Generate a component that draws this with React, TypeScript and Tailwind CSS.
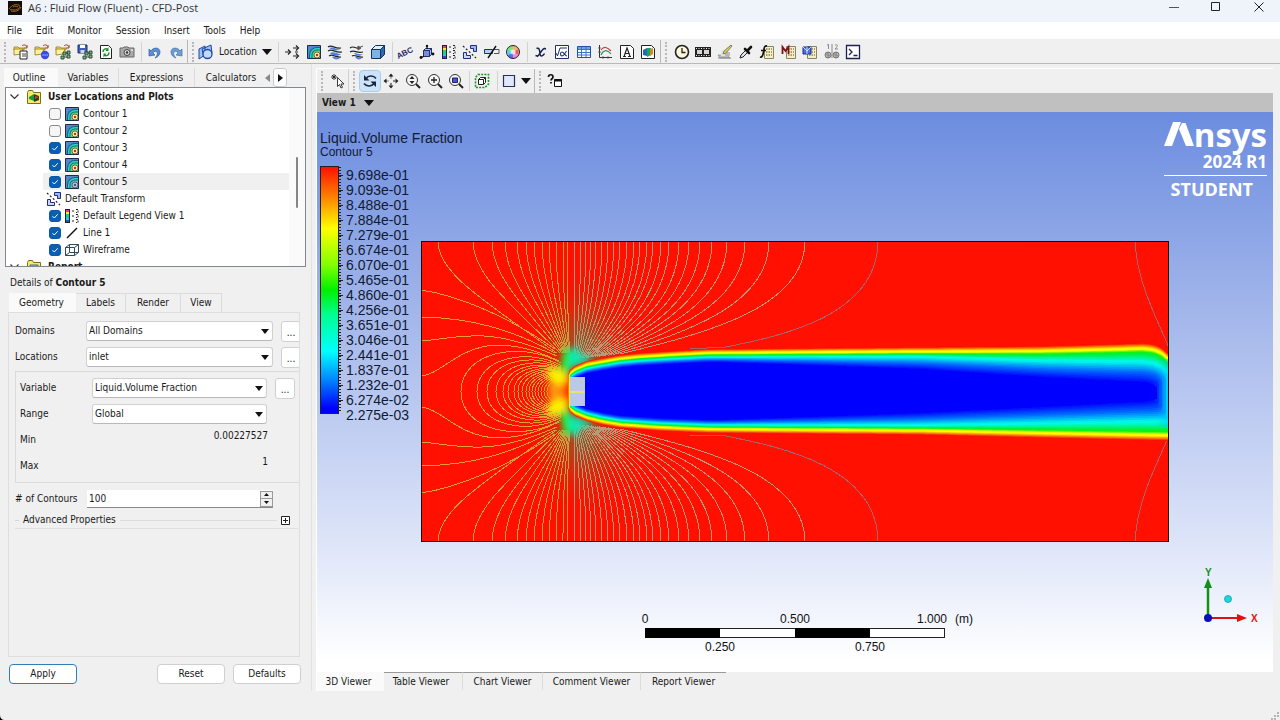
import React from "react";

/* ---------- icon helpers ---------- */

type Kids = { children?: React.ReactNode };

const Ico = ({ children }: Kids) => (
  <svg width="16" height="16" viewBox="0 0 16 16" fill="none" aria-hidden="true" className="shrink-0">
    {children}
  </svg>
);

const Folder = () => (
  <>
    <path d="M1 3h4l1 1h5v2H1z" fill="#f6df5a" stroke="#8c7a1c" strokeWidth="0.8" />
    <path d="M1 11V5h9l-2 5z" fill="#fdf19a" stroke="#8c7a1c" strokeWidth="0.8" />
    <path d="M9 2c2-2 4-1 5 1M14 1v3h-3" stroke="#a33a1c" strokeWidth="1" />
  </>
);

const MiniTree = () => (
  <path d="M8 8h3v3H8zM12 11h3v3h-3zM12 7h3v3h-3zM6 12h3v3H6zM11 9h2M9 13h3" stroke="#24412e" fill="#7fb08a" strokeWidth="0.9" />
);

const OpenFile = () => (
  <Ico><Folder /><path d="M7 7h7v8H7z" fill="#fff" stroke="#222" /><path d="M9 10h4M9 12h4" stroke="#444" /></Ico>
);
const OpenState = () => (
  <Ico><Folder /><circle cx="11" cy="11" r="4.2" fill="#3b4be0" /><path d="M8.6 11h1M10.6 11h1M12.6 11h1" stroke="#fff" /></Ico>
);
const OpenTree = () => <Ico><Folder /><MiniTree /></Ico>;
const SaveTree = () => (
  <Ico>
    <path d="M1 1h9v8H1z" fill="#3f62b8" stroke="#1f2f66" />
    <path d="M3 1h5v3H3z" fill="#fff" /><path d="M3.5 6h4v3h-4z" fill="#c9d4f0" /><MiniTree />
  </Ico>
);
const Reload = () => (
  <Ico>
    <path d="M2.5 1.5h8l3 3v10h-11z" fill="#fff" stroke="#222" />
    <path d="M5 8c0-3 3-4 5-2.300M11 8.500c0 3-3 4-5 2.500" stroke="#15932c" strokeWidth="1.500" />
    <path d="M10.500 3v4h-3zM5.500 13.500v-4h3z" fill="#15932c" />
  </Ico>
);
const Camera = () => (
  <Ico>
    <path d="M5 3h4l1 1h5v9H1V4h3z" fill="#aaa" stroke="#666" />
    <circle cx="8" cy="8.500" r="3" fill="#ddd" stroke="#444" /><circle cx="8" cy="8.500" r="1.200" fill="#333" />
    <path d="M12 6h2" stroke="#fff" />
  </Ico>
);
const Undo = () => (
  <Ico><path d="M4 7c2-4 9-4 9 1 0 3-2 5-5 6 2-2 3-4 2-6-1-1.500-3-1-4 1l2 2-6 1 0-7z" fill="#5b8fd4" stroke="#2c5b9f" strokeWidth="0.700" /></Ico>
);
const Redo = () => (
  <Ico><path d="M12 7C10 3 3 3 3 8c0 3 2 5 5 6-2-2-3-4-2-6 1-1.500 3-1 4 1l-2 2 6 1 0-7z" fill="#6d9fd6" stroke="#3d6ea8" strokeWidth="0.700" /></Ico>
);
const LocationIcon = () => (
  <Ico>
    <path d="M1 5l6-3 0 9-6 4zM4 5l9-4 1 8-8 4z" fill="#9fc0f2" stroke="#1c47a4" />
    <circle cx="9.500" cy="10" r="4.500" fill="#c5dafa" stroke="#1c47a4" strokeWidth="1.300" />
  </Ico>
);
const Vectors = () => (
  <Ico>
    <path d="M0 8h5M8 4h5M10 8h3M8 12h5" stroke="#222" strokeWidth="1" />
    <path d="M3 5.500L5.500 8 3 10.500M11 1.500L13.500 4 11 6.500M11 9.500l2.500 2.500L11 14.500" stroke="#222" strokeWidth="1.200" />
  </Ico>
);
const ContourIcon = ({ muted = false }: { muted?: boolean }) => (
  <Ico>
    <path d="M1.500 1.500h13v13h-13z" fill="#5587c8" stroke="#1d2b4a" />
    <path d="M3 14v-3a8 8 0 0 1 8-8h3v11z" fill="#1d5f86" />
    <path d="M4 14v-3a7 7 0 0 1 7-7h3v10z" fill="#22d6cc" />
    <path d="M5.500 14v-3a5.500 5.500 0 0 1 5.500-5.500h3V14z" fill="#176a5c" />
    <path d="M6.500 14v-3a4.500 4.500 0 0 1 4.500-4.500h3V14z" fill={muted ? "#6fb4c8" : "#58d890"} />
    <circle cx="11" cy="11" r="3" fill={muted ? "#b8c8d8" : "#fbf3a8"} stroke={muted ? "#3d4a66" : "#6b4a20"} strokeWidth="0.800" />
    <circle cx="11" cy="11" r="1.200" fill={muted ? "#4a5570" : "#c8281c"} />
  </Ico>
);
const Streamlines = () => (
  <Ico>
    <path d="M1 3c4-3 6 2 13 1M1 7c5-3 6 2 14 1M2 12c4-3 6 2 12 1" stroke="#222" strokeWidth="1.200" />
    <path d="M2 4c4-2 7 2 11 1-4 3-8 0-11-1zM3 9c4-2 6 1 11 1-3 3-8 2-11-1zM5 13c3-1 4 1 8 1-2 2-6 2-8-1z" fill="#4f7fd8" />
  </Ico>
);
const Particles = () => (
  <Ico>
    <path d="M1 4c4-3 5 1 9 0M1 8c5-3 6 2 13 0M3 12c3-2 6 2 11 1" stroke="#222" strokeWidth="1.200" />
    <path d="M5 9c3 0 5 2 9 1-3 3-7 2-9-1zM6 13c3-1 4 1 7 1-2 2-5 2-7-1z" fill="#4f7fd8" />
    <path d="M9 4l5-2M9 2l3 2-3 2z" fill="#555" stroke="#555" />
  </Ico>
);
const Volume = () => (
  <Ico>
    <path d="M1.500 5.500h9v9h-9z" fill="#7db4e4" stroke="#14335c" />
    <path d="M1.500 5.500l4-4h9l-4 4z" fill="#dcf0fc" stroke="#14335c" />
    <path d="M10.500 14.500v-9l4-4v9z" fill="#2a6cb4" stroke="#14335c" />
  </Ico>
);
const AbcIcon = () => (
  <svg width="18" height="16" viewBox="0 0 18 16" className="shrink-0" aria-hidden="true">
    <text x="0" y="14" fontSize="8" fontWeight="700" fontFamily="Liberation Sans" fill="#2b2a6d" transform="rotate(-26 3 12)">ABC</text>
  </svg>
);
const CoordIcon = () => (
  <Ico>
    <path d="M4.500 6.500h6v6h-6z" fill="#7b90d4" stroke="#20306b" /><path d="M4.500 6.500l2-2h6l-2 2zM10.500 12.500l2-2v-6l-2 2z" fill="#a9b9ec" stroke="#20306b" />
    <path d="M8 5V1M12 10h3M5 12l-3 2" stroke="#111" strokeWidth="1.200" /><circle cx="14" cy="10" r="1.400" fill="#111" /><circle cx="2" cy="13.500" r="1.400" fill="#111" /><circle cx="8" cy="2" r="1.200" fill="#111" />
  </Ico>
);
const LegendIcon = () => (
  <Ico>
    <rect x="1.500" y="1.500" width="4" height="13" fill="#21d07b" stroke="#222" />
    <path d="M2 2h3v2H2z" fill="#f5378a" /><path d="M2 4h3v2H2z" fill="#fbe64a" /><path d="M2 10h3v2H2z" fill="#23c9e8" /><path d="M2 12h3v2H2z" fill="#2a4fe0" />
    <path d="M8 3h2M8 8h2M8 13h2" stroke="#222" />
    <path d="M12 1.500h2v3h-2M12 6.500h2v3h-2M12 11.500h2v3h-2" stroke="#222" strokeDasharray="2 1" />
  </Ico>
);
const TransformIcon = () => (
  <Ico>
    <path d="M8.500 1.500h6v6h-3v-3h-3z" fill="#9db6ee" stroke="#1d2f7c" />
    <path d="M1.500 8.500h3v3h4v3h-7z" fill="#c9d6f6" stroke="#1d2f7c" />
    <path d="M1 2l13 12" stroke="#222" strokeDasharray="2 2" strokeWidth="1.200" />
  </Ico>
);
const ClipIcon = () => (
  <Ico>
    <path d="M0.500 5.500h8v4h-8z" fill="#b9ccf5" stroke="#1d2f7c" /><path d="M10 5.500h5v4h-5" stroke="#555" strokeWidth="1" />
    <path d="M4 14L12 2" stroke="#111" strokeWidth="1.400" />
  </Ico>
);
const ColorWheel = () => (
  <Ico>
    <path d="M8 8V1.500A6.500 6.500 0 0 1 13.600 4.700z" fill="#f3b27c" /><path d="M8 8l5.600-3.300v6.600z" fill="#f05a5a" />
    <path d="M8 8l5.600 3.300A6.500 6.500 0 0 1 8 14.500z" fill="#f08ae0" /><path d="M8 8v6.500a6.500 6.500 0 0 1-5.600-3.200z" fill="#5a6cf0" />
    <path d="M8 8l-5.600 3.300V4.700z" fill="#43d6e8" /><path d="M8 8L2.400 4.700A6.500 6.500 0 0 1 8 1.500z" fill="#7fe86a" />
    <circle cx="8" cy="8" r="6.500" stroke="#222" /><circle cx="8" cy="8" r="2.500" fill="#fff" opacity="0.700" />
  </Ico>
);
const VarIcon = () => (
  <Ico><path d="M3.500 4.500c4-2 3 6 4 7s3 0 4-2M12 4.500c-3-1-5 7-8 8" stroke="#17204f" strokeWidth="1.500" /><path d="M4.500 12l-2-.5M11.500 4.500l1.500.5" stroke="#17204f" strokeWidth="1.500" /></Ico>
);
const ExprIcon = () => (
  <Ico>
    <path d="M1.500 1.500h13v13h-13z" fill="#fff" stroke="#1d2f6c" />
    <path d="M2 9l1.500 3L6 4h7" stroke="#1d2f6c" /><path d="M12.500 7c-2 3-2.500 5-4.500 5s-2-4 0-4 3 4 5 4" stroke="#1d2f6c" strokeWidth="1.100" />
  </Ico>
);
const TableIcon = () => (
  <Ico>
    <path d="M1.500 2.500h13v11h-13z" fill="#fff" stroke="#23539c" /><path d="M2 3h12v2H2z" fill="#6fa0e8" />
    <path d="M2 5.500h12M2 8.500h12M2 11h12M5.500 3v10M10 3v10" stroke="#3a74c4" />
  </Ico>
);
const ChartIcon = () => (
  <Ico>
    <path d="M2.500 1v12.500H15" stroke="#333" /><path d="M1 4h3M1 8h3M6 12v3M11 12v3" stroke="#555" strokeWidth="0.800" />
    <path d="M4 6c3-4 6-3 10 1" stroke="#c83a3a" strokeWidth="1.200" /><path d="M4 11c2-5 6-6 10-1" stroke="#2b8f6a" strokeWidth="1.200" />
  </Ico>
);
const CommentIcon = () => (
  <Ico>
    <path d="M1.500 1.500h10l3 3v10h-13z" fill="#fff" stroke="#222" />
    <path d="M4 12.500h3M9 12.500h3M5.200 12L8 4l3 8M6.200 9.500h3.600" stroke="#222" strokeWidth="1.200" />
  </Ico>
);
const FigureIcon = () => (
  <Ico>
    <path d="M1.500 1.500h10l3 3v10h-13z" fill="#fff" stroke="#222" />
    <path d="M3 6l4-2v8l-4-1z" fill="#2563d0" /><path d="M7 4l4 0v7l-4 2z" fill="#19a84a" /><path d="M10 5l3-1v6l-3 2z" fill="#d8862f" />
  </Ico>
);
const ClockIcon = () => (
  <Ico><circle cx="8" cy="8" r="6.500" fill="#fbf7d8" stroke="#222" strokeWidth="1.600" /><path d="M8 4v4.500h3.500" stroke="#222" strokeWidth="1.300" /></Ico>
);
const FilmIcon = () => (
  <Ico>
    <path d="M0 3h16v10H0z" fill="#222" /><path d="M2 6h5v4H2zM9 6h5v4H9z" fill="#d8d6cf" />
    <path d="M1 4.500h14M1 11.500h14" stroke="#eee" strokeDasharray="1 1.500" />
  </Ico>
);
const QuickEdit = () => (
  <Ico>
    <path d="M1 11h9l3 3H3z" fill="#bbb" stroke="#888" strokeWidth="0.700" /><path d="M4 6h7v6H4z" fill="#e4e4e4" />
    <path d="M6 10l1-3 7-6 1 1-6 7z" fill="#d9d14a" stroke="#555" strokeWidth="0.700" /><path d="M9 9h4M8 11h5M1 14h13" stroke="#888" />
  </Ico>
);
const ProbeIcon = () => (
  <Ico><path d="M2 14l1-3 5-5 2 2-5 5z" fill="#dfe6f5" stroke="#222" /><path d="M7 5l4 4M10 6l3-3" stroke="#111" strokeWidth="2.600" strokeLinecap="round" /></Ico>
);
const Calc = () => (
  <>
    <path d="M5.500 2.500h9v12h-9z" fill="#f5efc8" stroke="#8a845c" />
    <path d="M7 5h6M7 8h6M7 11h6" stroke="#8a845c" strokeDasharray="1.500 1" strokeWidth="1.400" />
  </>
);
const FnCalc = () => (
  <Ico><Calc /><path d="M8 2c-3-1-3 3-3.500 6S3 14 1 13M2 6.500h5" stroke="#111" strokeWidth="1.600" /></Ico>
);
const MacroCalc = () => (
  <Ico><Calc /><path d="M1.500 10V3l3 4 3-4v7" stroke="#7d1414" strokeWidth="1.800" /></Ico>
);
const MeshCalc = () => (
  <Ico><Calc /><path d="M1 3h8v7H1z" fill="#4a6fe0" stroke="#1a2f8c" /><path d="M1 3l4 4 4-4M5 3v7" stroke="#dfe7ff" strokeWidth="0.900" /></Ico>
);
const CompareIcon = () => (
  <Ico>
    <path d="M3 1l1.500-.5V5M8 0v14M11 1.500c2-2 4 0 0 3.500h3" stroke="#888" />
    <circle cx="4" cy="11" r="3" fill="#b5b5b5" stroke="#777" /><circle cx="12" cy="11" r="3" fill="#b5b5b5" stroke="#777" />
    <path d="M2 10l4 2M10 10l4 2M4 8v6M12 8v6" stroke="#777" strokeWidth="0.700" />
  </Ico>
);
const ConsoleIcon = () => (
  <Ico><path d="M1.500 1.500h13v13h-13z" fill="#fff" stroke="#1b2450" strokeWidth="1.300" /><path d="M4 5l3 3-3 3M8.500 11.500h4" stroke="#1b2450" strokeWidth="1.300" /></Ico>
);
const PickIcon = () => (
  <Ico>
    <path d="M4 1v6M1 4h6M2 2l4 4M6 2L2 6" stroke="#222" strokeWidth="0.900" />
    <path d="M7.500 4.500v9l2-2 1.500 3.500 1.500-.7-1.500-3.300h3z" fill="#fff" stroke="#222" strokeWidth="0.900" />
  </Ico>
);
const RotateIcon = () => (
  <Ico>
    <path d="M4 5.500c2-3 7.500-3.500 10 0M12 10.500c-2 3-7.500 3.500-10 0" stroke="#1b2440" strokeWidth="1.500" />
    <path d="M2 2v5.500h5.500zM14 14V8.500H8.500z" fill="#1b2440" />
  </Ico>
);
const PanIcon = () => (
  <Ico>
    <path d="M8 2v4M8 10v4M2 8h4M10 8h4" stroke="#222" strokeWidth="1.100" strokeDasharray="2.500 1" />
    <path d="M8 0.500l2.500 3h-5zM8 15.500l2.500-3h-5zM0.500 8l3-2.500v5zM15.500 8l-3-2.500v5z" fill="#222" />
  </Ico>
);
const Lens = ({ children }: Kids) => (
  <Ico><circle cx="7" cy="7" r="5.500" fill="#f6f6f6" stroke="#333" strokeWidth="1" /><path d="M11 11l4 4" stroke="#222" strokeWidth="2" />{children}</Ico>
);
const ZoomDrag = () => <Lens><path d="M7 3l2.500 3h-5zM7 11l2.500-3h-5z" fill="#222" /></Lens>;
const ZoomBox = () => <Lens><path d="M4 7h6M7 4v6" stroke="#222" strokeWidth="1.300" /></Lens>;
const FitView = () => <Lens><path d="M4.500 5h5v4.500h-5z" fill="#4a55c8" stroke="#1a226c" /></Lens>;
const HighlightIcon = () => (
  <Ico>
    <path d="M4 1.500h10.500V11l-3.500 3.500H1.500V4.500z" stroke="#159a1f" strokeWidth="1.600" strokeDasharray="2 1.200" />
    <path d="M4.500 6.500h5v5h-5zM4.500 6.500l2-2h5v5l-2 2M9.500 6.500l2-2" fill="#fff" stroke="#222" />
  </Ico>
);
const SquareIcon = () => (
  <Ico><path d="M2.500 2.500h11v11h-11z" fill="#dfe7fb" stroke="#27305a" strokeWidth="1.200" /></Ico>
);
const HelpIcon = () => (
  <Ico>
    <path d="M1.500 4c0-3 4.500-3 4.500 0 0 1.700-2 1.800-2 3.500M4 9v1.600" stroke="#111" strokeWidth="1.700" />
    <path d="M7.500 6.500h7v7h-7z" fill="#fff" stroke="#111" strokeWidth="1" /><path d="M7 7.500h8" stroke="#111" strokeWidth="2" />
  </Ico>
);
const LineIcon = () => <Ico><path d="M3 13L13 3" stroke="#111" strokeWidth="1.500" /></Ico>;
const WireframeIcon = () => (
  <Ico><path d="M1.500 5.500h9v8h-9zM5.500 2.500h9v8h-9zM1.500 5.500l4-3M10.500 5.500l4-3M1.500 13.500l4-3M10.500 13.500l4-3" stroke="#2b4a5c" /></Ico>
);
const FolderPlots = () => (
  <Ico>
    <path d="M1.500 3.500v11h13v-11h-7l-1-2h-4z" fill="#f7ea66" stroke="#7c6e1a" />
    <path d="M3 8l5-3v7l-5-2z" fill="#1a9a3c" /><path d="M8 5l5 2v4l-5 2z" fill="#2a3d2a" /><path d="M9 7l4 1-4 2z" fill="#d83a2a" />
  </Ico>
);
const FolderReport = () => (
  <Ico><path d="M1.500 3.500v11h13v-11h-7l-1-2h-4z" fill="#f7ea66" stroke="#7c6e1a" /><path d="M4 6h8v6H4z" fill="#9ab3ea" stroke="#47609c" /></Ico>
);
const Down = () => (
  <svg width="10" height="6" viewBox="0 0 10 6" className="shrink-0" aria-hidden="true"><path d="M0 0h10L5 6z" fill="#111" /></svg>
);

/* ---------- toolbar ---------- */

const ToolBtn = ({ label, on = false, children }: { label: string; on?: boolean } & Kids) => (
  <button
    type="button"
    aria-label={label}
    className={
      on
        ? "flex h-[22px] items-center justify-center rounded-sm border border-[#a8cdea] bg-[#cce4f7]"
        : "flex h-[22px] items-center justify-center"
    }
  >
    {children}
  </button>
);
const Handle = () => (
  <span className="mx-1 h-5 w-0 shrink-0 border-l-2 border-dotted border-[#b8b8b8]" />
);
const Sep = () => <span className="h-5 w-px shrink-0 bg-[#d2d2d2]" />;

const MainToolbar = () => (
  <div className="flex h-[25px] shrink-0 items-center border-b border-[#b9b9b9] bg-[#f0f0f0] pt-px">
    <Handle />
    <div className="grid w-[128px] grid-cols-6">
      <ToolBtn label="Load results"><OpenFile /></ToolBtn>
      <ToolBtn label="Load session"><OpenState /></ToolBtn>
      <ToolBtn label="Load state"><OpenTree /></ToolBtn>
      <ToolBtn label="Save state"><SaveTree /></ToolBtn>
      <ToolBtn label="Reload"><Reload /></ToolBtn>
      <ToolBtn label="Save picture"><Camera /></ToolBtn>
    </div>
    <div className="flex w-[6px] justify-center"><Sep /></div>
    <div className="grid w-[43px] grid-cols-2">
      <ToolBtn label="Undo"><Undo /></ToolBtn>
      <ToolBtn label="Redo"><Redo /></ToolBtn>
    </div>
    <span className="h-6 w-px bg-[#b9b9b9]" />
    <Handle />
    <button type="button" className="flex w-[74px] items-center justify-between">
      <LocationIcon />Location<Down />
    </button>
    <div className="flex w-[7px] justify-end"><Sep /></div>
    <div className="ml-[3px] grid w-[107px] grid-cols-5">
      <ToolBtn label="Vector"><Vectors /></ToolBtn>
      <ToolBtn label="Contour"><ContourIcon /></ToolBtn>
      <ToolBtn label="Streamline"><Streamlines /></ToolBtn>
      <ToolBtn label="Particle track"><Particles /></ToolBtn>
      <ToolBtn label="Volume rendering"><Volume /></ToolBtn>
    </div>
    <div className="flex w-[6px] justify-center"><Sep /></div>
    <div className="grid w-[129px] grid-cols-6">
      <ToolBtn label="Text"><AbcIcon /></ToolBtn>
      <ToolBtn label="Coordinate frame"><CoordIcon /></ToolBtn>
      <ToolBtn label="Legend"><LegendIcon /></ToolBtn>
      <ToolBtn label="Instance transform"><TransformIcon /></ToolBtn>
      <ToolBtn label="Clip plane"><ClipIcon /></ToolBtn>
      <ToolBtn label="Color map"><ColorWheel /></ToolBtn>
    </div>
    <div className="flex w-[6px] justify-center"><Sep /></div>
    <div className="grid w-[129px] grid-cols-6">
      <ToolBtn label="Variable"><VarIcon /></ToolBtn>
      <ToolBtn label="Expression"><ExprIcon /></ToolBtn>
      <ToolBtn label="Table"><TableIcon /></ToolBtn>
      <ToolBtn label="Chart"><ChartIcon /></ToolBtn>
      <ToolBtn label="Comment"><CommentIcon /></ToolBtn>
      <ToolBtn label="Figure"><FigureIcon /></ToolBtn>
    </div>
    <span className="ml-px h-6 w-px bg-[#b9b9b9]" />
    <Handle />
    <div className="grid w-[193px] grid-cols-9">
      <ToolBtn label="Timestep selector"><ClockIcon /></ToolBtn>
      <ToolBtn label="Animation"><FilmIcon /></ToolBtn>
      <ToolBtn label="Quick editor"><QuickEdit /></ToolBtn>
      <ToolBtn label="Probe"><ProbeIcon /></ToolBtn>
      <ToolBtn label="Function calculator"><FnCalc /></ToolBtn>
      <ToolBtn label="Macro calculator"><MacroCalc /></ToolBtn>
      <ToolBtn label="Mesh calculator"><MeshCalc /></ToolBtn>
      <ToolBtn label="Case comparison"><CompareIcon /></ToolBtn>
      <ToolBtn label="Command editor"><ConsoleIcon /></ToolBtn>
    </div>
  </div>
);

/* ---------- left column ---------- */

const Check = ({ label, on }: { label: string; on: boolean }) => (
  <span className="relative flex size-3 shrink-0">
    <input
      type="checkbox"
      aria-label={label}
      defaultChecked={on}
      className="size-3 appearance-none rounded-[3px] border border-[#8a8a8a] bg-[#f6f6f6] checked:border-[#0a5aa8] checked:bg-[#0a5fb4]"
    />
    {on && (
      <svg viewBox="0 0 12 12" className="pointer-events-none absolute inset-0" aria-hidden="true">
        <path d="M3.500 6.200l1.800 1.800 3.400-3.700" stroke="#fff" fill="none" />
      </svg>
    )}
  </span>
);

const items = [
  { name: "Contour 1", on: false, icon: <ContourIcon /> },
  { name: "Contour 2", on: false, icon: <ContourIcon /> },
  { name: "Contour 3", on: true, icon: <ContourIcon /> },
  { name: "Contour 4", on: true, icon: <ContourIcon /> },
  { name: "Contour 5", on: true, icon: <ContourIcon muted />, selected: true },
  { name: "Default Transform", on: null, icon: <TransformIcon /> },
  { name: "Default Legend View 1", on: true, icon: <LegendIcon /> },
  { name: "Line 1", on: true, icon: <LineIcon /> },
  { name: "Wireframe", on: true, icon: <WireframeIcon /> },
];

const Chevron = () => (
  <svg width="9" height="6" viewBox="0 0 9 6" className="shrink-0" aria-hidden="true">
    <path d="M0.500 0.500l4 4 4-4" stroke="#333" strokeWidth="1.200" fill="none" />
  </svg>
);

const TreeFolder = ({ name, icon }: { name: string; icon: React.ReactNode }) => (
  <div className="flex h-[17px] shrink-0 items-center gap-[6px] pl-1 font-bold">
    <Chevron />
    <span className="ml-px flex">{icon}</span>
    {name}
  </div>
);

const Tree = () => (
  <div className="mx-[5px] flex h-[180px] shrink-0 justify-between overflow-hidden border border-[#828790] bg-white">
    <div className="flex flex-1 flex-col">
      <TreeFolder name="User Locations and Plots" icon={<FolderPlots />} />
      {items.map((it) => (
        <div
          key={it.name}
          className={
            it.selected
              ? "ml-[37px] flex h-[17px] shrink-0 items-center gap-[3px] bg-[#f0f0f0] pl-[6px]"
              : it.on === null
                ? "ml-[37px] flex h-[17px] shrink-0 items-center gap-[3px] pl-[3px]"
                : "ml-[37px] flex h-[17px] shrink-0 items-center gap-[3px] pl-[6px]"
          }
        >
          {it.on !== null && <Check label={it.name} on={it.on} />}
          {it.icon}
          {it.name}
        </div>
      ))}
      <TreeFolder name="Report" icon={<FolderReport />} />
    </div>
    <div className="flex w-4 justify-center bg-[#fafafa] pt-[69px]">
      <span className="h-[51px] w-[2px] rounded bg-[#858585]" />
    </div>
  </div>
);

const Field = ({ id, value, width }: { id: string; value: string; width: string }) => (
  <span className={"relative flex h-5 items-center " + width}>
    <select
      id={id}
      defaultValue={value}
      className="h-5 w-full appearance-none rounded-[3px] border border-[#d0d0d0] border-b-[#b8b8b8] bg-white pl-[2px]"
    >
      <option>{value}</option>
    </select>
    <svg viewBox="0 0 8 5" className="pointer-events-none absolute right-1 h-[5px] w-2" aria-hidden="true">
      <path d="M0 0h8L4 5z" fill="#111" />
    </svg>
  </span>
);

const More = ({ label }: { label: string }) => (
  <button type="button" aria-label={label} className="flex h-[21px] w-5 shrink-0 items-center justify-center rounded-[3px] border border-[#d0d0d0] bg-white pt-1">
    ...
  </button>
);

const Push = ({ text, primary = false }: { text: string; primary?: boolean }) => (
  <button
    type="button"
    className={
      primary
        ? "h-5 w-[68px] rounded-[4px] border border-[#2f7fb5] bg-white"
        : "h-5 w-[68px] rounded-[4px] border border-[#cfcfcf] bg-white"
    }
  >
    {text}
  </button>
);

const LeftPanel = () => (
  <div className="flex w-[312px] shrink-0 flex-col border-r border-[#e2e2e2] pt-1">
    <div className="flex h-[19px] shrink-0 items-stretch pl-1" role="tablist">
      <button type="button" role="tab" aria-selected="true" className="w-[54px] bg-[#fafafa] pr-1">Outline</button>
      <button type="button" role="tab" className="w-[61px] border-r border-[#dcdcdc]">Variables</button>
      <button type="button" role="tab" className="w-[76px] border-r border-[#dcdcdc]">Expressions</button>
      <button type="button" role="tab" className="w-[66px] pl-[6px] whitespace-nowrap">Calculators</button>
      <button type="button" aria-label="Scroll tabs left" className="flex w-3 items-center justify-center">
        <svg width="5" height="8" viewBox="0 0 5 8" aria-hidden="true"><path d="M5 0v8L0 4z" fill="#888" /></svg>
      </button>
      <button type="button" aria-label="Scroll tabs right" className="flex w-[14px] items-center justify-center rounded-[3px] border border-[#ccc] bg-white">
        <svg width="5" height="8" viewBox="0 0 5 8" aria-hidden="true"><path d="M0 0v8l5-4z" fill="#111" /></svg>
      </button>
    </div>
    <Tree />
    <div className="flex h-[26px] shrink-0 items-center pt-[5px] pl-[10px]">
      <span>Details of <b>Contour 5</b></span>
    </div>
    <div className="flex h-[19px] shrink-0 pl-[9px]" role="tablist">
      <button type="button" role="tab" aria-selected="true" className="w-[67px] bg-[#fafafa] pr-[2px]">Geometry</button>
      <button type="button" role="tab" className="w-[50px] border-t border-r border-[#dcdcdc]">Labels</button>
      <button type="button" role="tab" className="w-[55px] border-t border-r border-[#dcdcdc]">Render</button>
      <button type="button" role="tab" className="w-[41px] border-t border-r border-[#dcdcdc]">View</button>
    </div>
    <div className="mr-[11px] ml-2 flex flex-1 flex-col overflow-hidden border border-[#dedede] pt-[5px] pl-[6px]">
      <div className="flex h-[26px] items-center">
        <label htmlFor="domains" className="w-[71px] shrink-0">Domains</label>
        <Field id="domains" value="All Domains" width="w-[187px] shrink-0" />
        <span className="ml-2 flex"><More label="Choose domains" /></span>
      </div>
      <div className="flex h-[26px] items-center">
        <label htmlFor="locations" className="w-[71px] shrink-0">Locations</label>
        <Field id="locations" value="inlet" width="w-[187px] shrink-0" />
        <span className="ml-2 flex"><More label="Choose locations" /></span>
      </div>
      <div className="mt-px flex h-[112px] flex-col border-y border-l border-[#dadada] pt-[3px] pl-1">
        <div className="flex h-[26px] items-center">
          <label htmlFor="variable" className="w-[72px] shrink-0">Variable</label>
          <Field id="variable" value="Liquid.Volume Fraction" width="w-[175px] shrink-0" />
          <span className="ml-2 flex"><More label="Choose variable" /></span>
        </div>
        <div className="flex h-[26px] items-center">
          <label htmlFor="range" className="w-[72px] shrink-0">Range</label>
          <Field id="range" value="Global" width="w-[175px] shrink-0" />
        </div>
        <div className="flex h-[26px] w-[248px] items-center justify-between">
          <span>Min</span><span className="pb-2">0.00227527</span>
        </div>
        <div className="flex h-[26px] w-[248px] items-center justify-between">
          <span>Max</span><span className="pb-2">1</span>
        </div>
      </div>
      <div className="mt-[7px] flex h-[18px] items-center">
        <label htmlFor="contours" className="w-[72px] shrink-0 whitespace-nowrap"># of Contours</label>
        <div className="flex h-[18px] w-[186px] shrink-0 items-center border-b border-[#888] bg-white">
          <input id="contours" type="text" defaultValue="100" className="w-full min-w-0 flex-1 bg-transparent pl-[2px] outline-none" />
          <span className="flex w-[13px] flex-col">
            <button type="button" aria-label="Increase" className="flex h-2 items-center justify-center border border-[#999] bg-[#f0f0f0]">
              <svg width="5" height="3" viewBox="0 0 5 3" aria-hidden="true"><path d="M0 3h5L2.500 0z" fill="#111" /></svg>
            </button>
            <button type="button" aria-label="Decrease" className="flex h-2 items-center justify-center border border-t-0 border-[#999] bg-[#f0f0f0]">
              <svg width="5" height="3" viewBox="0 0 5 3" aria-hidden="true"><path d="M0 0h5L2.500 3z" fill="#111" /></svg>
            </button>
          </span>
        </div>
      </div>
      <div className="mt-1 flex h-4 items-center gap-1">
        <span className="h-px w-1 bg-[#d4d4d4]" />
        <span>Advanced Properties</span>
        <span className="h-px flex-1 bg-[#dcdcdc]" />
        <button type="button" aria-label="Expand advanced properties" className="mr-[9px] size-[9px]">
          <svg viewBox="0 0 9 9" className="size-[9px]" aria-hidden="true"><path d="M0.500 0.500h8v8h-8zM2 4.500h5M4.500 2v5" stroke="#222" fill="#fff" /></svg>
        </button>
      </div>
      <div className="mr-[1px] border-x border-b border-[#e0e0e0]" />
    </div>
    <div className="flex h-[34px] shrink-0 items-center gap-2 pr-[10px] pl-[9px]">
      <Push text="Apply" primary />
      <span className="flex-1" />
      <Push text="Reset" />
      <Push text="Defaults" />
    </div>
  </div>
);

/* ---------- contour plot ---------- */

const W = 748;
const H = 301;

type Pt = [number, number];

const lerp = (pts: Pt[], x: number) => {
  if (x <= pts[0][0]) return pts[0][1];
  for (let i = 1; i < pts.length; i++) {
    if (x <= pts[i][0]) {
      const [x0, y0] = pts[i - 1];
      const [x1, y1] = pts[i];
      return y0 + ((y1 - y0) * (x - x0)) / (x1 - x0);
    }
  }
  return pts[pts.length - 1][1];
};

const upper: Pt[] = [[147, 134], [149, 129], [154, 125], [166, 120], [182, 117], [199, 114], [219, 112], [250, 110], [286, 108], [386, 107], [499, 106], [619, 105], [690, 103], [722, 102], [732, 103], [740, 106], [748, 113]];
const lower: Pt[] = [[147, 166], [149, 171], [154, 175], [166, 180], [182, 184], [199, 187], [239, 190], [286, 192], [386, 193], [499, 194], [619, 197], [748, 200]];

/* red, green and blue channels of the rainbow from plume edge to core */
const channels: Pt[][] = [
  [[0, 240], [0.12, 255], [0.24, 255], [0.34, 240], [0.44, 0], [0.6, 0], [1, 0]],
  [[0, 20], [0.12, 130], [0.24, 250], [0.34, 255], [0.44, 240], [0.62, 250], [0.8, 110], [1, 0]],
  [[0, 0], [0.34, 0], [0.44, 30], [0.6, 230], [0.8, 255], [1, 255]],
];
const ramp = (t: number) => `rgb(${channels.map((s) => Math.round(lerp(s, t))).join(",")})`;

/* distance of a band from the plume edge, growing downstream */
const inset = (t: number, x: number) => {
  const near = 12 * t;
  const mid = t < 0.6 ? 15 * t : 9 + (t - 0.6) * 32;
  const far = t < 0.42 ? 19 * t : 8 + (t - 0.42) * 56;
  return lerp([[147, near], [300, near * 1.100], [499, mid], [748, far]], x);
};

const band = (t: number) => {
  const end = t < 0.7 ? W : W - (t - 0.7) * 40;
  const top: string[] = [];
  const bottom: string[] = [];
  for (let x = 147 + 5 * t; x <= end; x += x < 200 ? 2 : 4) {
    const over = Math.max(0, (x - (end - 14)) / 14);
    const d = inset(t, x) + (t < 0.7 ? 0 : over * over * 8 * (t - 0.7));
    top.push(`${x.toFixed(1)},${(lerp(upper, x) + d).toFixed(1)}`);
    bottom.unshift(`${x.toFixed(1)},${(lerp(lower, x) - d).toFixed(1)}`);
  }
  if (t < 0.7) {
    top.push(`${W},${(lerp(upper, W) + inset(t, W)).toFixed(1)}`);
    bottom.unshift(`${W},${(lerp(lower, W) - inset(t, W)).toFixed(1)}`);
  }
  return top.concat(bottom).join(" ");
};

const bands = Array.from({ length: 31 }, (_, i) => i / 30);

const leftTops = [17, 52, 71, 84, 96, 105, 113, 121, 128, 135, 142, 147];
const rightTops = [154, 160, 165, 170, 175, 181, 187, 193, 199, 206, 213, 219, 226, 232, 240, 248, 258, 268, 279, 291, 306, 324, 348, 384];
const ovals = [40, 56, 66, 75, 82, 87, 93, 97, 101, 105, 108, 111, 114, 117, 120, 123, 126];

const leftLine = (x: number) => `M${x} 0C${x} 32 ${x + (142 - x) * 0.35} 58 ${134 + x * 0.1} 112`;
const rightLine = (x: number) => {
  const k = (x - 154) / 230;
  return `M${x} 0C${x} ${50 + 15 * k} ${x - (x - 152) * 0.4} ${86 + 5 * k} ${153 + 46 * k} ${118 - 5 * k}`;
};
const ovalLine = (x: number) => {
  const k = (x - 40) / 86;
  const top = 99 + 38 * k;
  return `M140 ${122 + 14 * k}C${x + (140 - x) * 0.6} ${top} ${x} ${top + 12 - 5 * k} ${x} 150.5`;
};

const HalfLines = () => (
  <>
    <g stroke="#dca030">
      <path d="M0 49C35 54 85 74 134 108" />
      <path d="M0 76C50 77 90 88 134 112" />
      <path d="M0 100C40 97 65 84 136 115" />
      <path d="M0 135C30 132 50 78 138 120" />
      {ovals.map((x) => <path key={x} d={ovalLine(x)} />)}
    </g>
    <g stroke="#c8a040">{leftTops.map((x) => <path key={x} d={leftLine(x)} />)}</g>
    <g stroke="#b89a78">
      {rightTops.map((x) => <path key={x} d={rightLine(x)} />)}
    </g>
    <g stroke="#a5656e">
      <path d="M457 0C457 75 360 95 305 106L286 107H269" />
      <path d="M714 0C716 45 740 85 748 107" />
    </g>
  </>
);

const Plot = () => (
  <svg width={W} height={H} viewBox={`0 0 ${W} ${H}`} role="img" aria-label="Liquid volume fraction contours">
    <defs>
      <filter id="soft" x="-30%" y="-30%" width="160%" height="160%"><feGaussianBlur stdDeviation="3" /></filter>
      <filter id="edge"><feGaussianBlur stdDeviation="0.6" /></filter>
      <radialGradient id="shade"><stop offset="0" stopColor="#5f7a40" stopOpacity="0.800" /><stop offset="0.500" stopColor="#a05020" stopOpacity="0.400" /><stop offset="1" stopColor="#c03010" stopOpacity="0" /></radialGradient>
      <linearGradient id="outlet"><stop offset="0" stopColor="#00b8ff" stopOpacity="0" /><stop offset="1" stopColor="#00c8ff" stopOpacity="0.500" /></linearGradient>
      <clipPath id="frame"><rect width={W} height={H} /></clipPath>
    </defs>
    <rect width={W} height={H} fill="#ff1000" />
    <g clipPath="url(#frame)">
      <ellipse cx="162" cy="102" rx="50" ry="70" fill="url(#shade)" />
      <ellipse cx="162" cy="199" rx="50" ry="70" fill="url(#shade)" />
      <g fill="none" strokeWidth="1" shapeRendering="crispEdges">
        <HalfLines />
        <g transform="matrix(1 0 0 -1 0 301)"><HalfLines /></g>
      </g>
      <g filter="url(#soft)">
        <ellipse cx="137" cy="150" rx="10" ry="16" fill="#ff9410" />
        <path d="M127 127l16 3 5 10-10 4-10-6zM127 174l16-3 5-10-10-4-10 6z" fill="#fff000" />
        <path d="M139 128l4-20 9 2-4 26zM139 173l4 20 9-2-4-26z" fill="#20f030" />
        <path d="M147 128l2-18 5-6 6 10 14 4-22 8zM147 173l2 18 5 6 6-10 14-4-22-8z" fill="#10e8b0" />
        <ellipse cx="148" cy="150" rx="6" ry="12" fill="#ff2800" />
      </g>
      <g filter="url(#edge)">
        {bands.map((t) => <polygon key={t} points={band(t)} fill={ramp(t)} />)}
      </g>
      <rect x="736" y="118" width="12" height="68" fill="url(#outlet)" />
    </g>
    <rect x="149" y="136" width="15" height="29" fill="#bcc8ea" />
    <rect x="149" y="150" width="15" height="2" fill="#e8e070" />
    <rect x="0.500" y="0.500" width={W - 1} height={H - 1} fill="none" stroke="#1a0a0a" />
  </svg>
);

const labels = ["9.698e-01", "9.093e-01", "8.488e-01", "7.884e-01", "7.279e-01", "6.674e-01", "6.070e-01", "5.465e-01", "4.860e-01", "4.256e-01", "3.651e-01", "3.046e-01", "2.441e-01", "1.837e-01", "1.232e-01", "6.274e-02", "2.275e-03"];

const Legend = () => (
  <div className="absolute top-[18px] left-[3px] text-[#111a33]">
    <div className="text-[14px] leading-4">Liquid.Volume Fraction</div>
    <div className="text-[12px] leading-[12px]">Contour 5</div>
    <div className="mt-2 flex">
      <div className="h-[248px] w-[19px] border border-[#222] bg-[linear-gradient(to_bottom,#ff1000_0%,#ff8000_12%,#ffff00_25%,#80ff00_40%,#00f000_50%,#00ff90_60%,#00ffff_75%,#0080ff_87%,#0000ff_98%)]" />
      <svg width="5" height="248" viewBox="0 0 5 248" aria-hidden="true">
        <path d="M1 1v246" stroke="#222" strokeWidth="2" strokeDasharray="1 2" />
        <path d="M2 9v236" stroke="#222" strokeWidth="4" strokeDasharray="1 14" />
      </svg>
      <div className="ml-[2px] pt-[2px] text-[14px] leading-[15px]">
        {labels.map((l) => <div key={l}>{l}</div>)}
      </div>
    </div>
  </div>
);

const Logo = () => (
  <div className="absolute top-1 right-[6px] flex flex-col items-end font-['Open_Sans',sans-serif] font-bold text-white">
    <div className="flex h-9 items-center">
      <svg width="30" height="26" viewBox="0 0 30 26" aria-hidden="true">
        <path d="M9 1h8L8 25H0z" fill="#fff" /><path d="M18 2l3.500 0L30 25h-8L15 8z" fill="#fff" />
      </svg>
      <span className="text-[33px] leading-[33px]">nsys</span>
    </div>
    <div className="text-[17px] leading-[20px]">2024 R1</div>
    <div className="mt-[3px] h-px w-[103px] bg-white" />
    <div className="mt-[3px] mr-[14px] text-[18px] leading-[20px]">STUDENT</div>
  </div>
);

const ScaleBar = () => (
  <svg width="380" height="42" viewBox="0 0 380 42" role="img" aria-label="Scale in metres" className="font-['Liberation_Sans',Arial,sans-serif] text-[12px]">
    <rect x="40.500" y="16.500" width="299" height="9" fill="#fff" stroke="#222" />
    <path d="M40 16h75v10H40zM190 16h75v10h-75z" fill="#000" />
    <g textAnchor="middle" fill="#111">
      <text x="40" y="11">0</text><text x="190" y="11">0.500</text><text x="327" y="11">1.000</text><text x="359" y="11">(m)</text>
      <text x="115" y="39">0.250</text><text x="265" y="39">0.750</text>
    </g>
  </svg>
);

const Triad = () => (
  <svg width="64" height="60" viewBox="0 0 64 60" className="absolute right-[11px] bottom-[46px] font-['Liberation_Sans',Arial,sans-serif] text-[10px] font-bold" role="img" aria-label="Axes">
    <path d="M10 52V18" stroke="#12901a" strokeWidth="2.500" /><path d="M10 12l4 10H6z" fill="#12901a" />
    <path d="M10 52h32" stroke="#e01010" strokeWidth="2" /><path d="M49 52l-10-4v8z" fill="#e01010" />
    <circle cx="10" cy="52" r="4" fill="#0a10b8" /><circle cx="30" cy="33" r="3.500" fill="#18d8e0" stroke="#1290a0" strokeWidth="0.700" />
    <text x="7" y="10" fill="#12901a">Y</text><text x="53" y="56" fill="#e01010">X</text>
  </svg>
);

const RightPanel = () => (
  <div className="mt-1 ml-1 flex min-w-0 flex-1 flex-col border-l border-white pr-[7px]">
    <div className="flex h-[25px] shrink-0 items-center border-t border-white">
      <Handle />
      <div className="grid w-[21px]"><ToolBtn label="Select"><PickIcon /></ToolBtn></div>
      <span className="h-6 w-px bg-[#d2d2d2]" />
      <Handle />
      <div className="grid w-[108px] grid-cols-5">
        <ToolBtn label="Rotate" on><RotateIcon /></ToolBtn>
        <ToolBtn label="Pan"><PanIcon /></ToolBtn>
        <ToolBtn label="Zoom"><ZoomDrag /></ToolBtn>
        <ToolBtn label="Zoom box"><ZoomBox /></ToolBtn>
        <ToolBtn label="Fit view"><FitView /></ToolBtn>
      </div>
      <div className="flex w-1 justify-center"><Sep /></div>
      <div className="grid w-[22px]"><ToolBtn label="Toggle highlighting"><HighlightIcon /></ToolBtn></div>
      <div className="flex w-2 justify-center"><Sep /></div>
      <button type="button" aria-label="Viewport layout" className="flex w-[30px] items-center justify-between"><SquareIcon /><Down /></button>
      <span className="ml-[3px] h-6 w-px bg-[#b9b9b9]" />
      <Handle />
      <div className="grid w-[20px]"><ToolBtn label="Help"><HelpIcon /></ToolBtn></div>
    </div>
    <div className="flex h-[19px] shrink-0 items-center gap-2 bg-[#c0c0c0] pl-[5px] font-bold">
      View 1<Down />
    </div>
    <div className="relative flex min-h-[560px] flex-1 items-center justify-center overflow-hidden bg-[linear-gradient(to_bottom,#6b8cdf_0%,#a9bbec_40%,#dfe6f9_78%,#ffffff_98%)] pb-px font-['Liberation_Sans',Arial,sans-serif]">
      <Plot />
      <Legend />
      <Logo />
      <div className="absolute inset-x-0 bottom-[18px] flex justify-center"><ScaleBar /></div>
      <Triad />
    </div>
    <div className="flex h-[19px] shrink-0 items-start" role="tablist">
      <button type="button" role="tab" aria-selected="true" className="h-[19px] w-[67px] bg-[#fafafa] pr-1">3D Viewer</button>
      <button type="button" role="tab" className="h-[18px] w-[79px] border-t border-r border-t-[#999] border-r-[#dcdcdc] pr-1">Table Viewer</button>
      <button type="button" role="tab" className="h-[18px] w-[80px] border-t border-r border-t-[#999] border-r-[#dcdcdc]">Chart Viewer</button>
      <button type="button" role="tab" className="h-[18px] w-[98px] border-t border-r border-t-[#999] border-r-[#dcdcdc]">Comment Viewer</button>
      <button type="button" role="tab" className="h-[18px] w-[85px] border-t border-[#999]">Report Viewer</button>
    </div>
  </div>
);

export default function App() {
  return (
    <div className="flex min-h-screen flex-col bg-[#f0f0f0] font-['DejaVu_Sans_Condensed','Noto_Sans',sans-serif] text-[10px] leading-[14px] text-[#1a1a1a]">
      <header className="flex h-[22px] shrink-0 items-start justify-between bg-[#eff3fa] pl-2">
        <div className="flex h-[15px] items-center gap-[6px] font-['Open_Sans',sans-serif] text-[11px] text-[#333]">
          <svg width="14" height="14" viewBox="0 0 14 14" aria-hidden="true">
            <path d="M0 0h14v14H0z" fill="#120c08" />
            <path d="M1 8c3-4 6-5 10-4 2 2-1 5-5 5-2 0-3-1-4 0M3 10c4 1 8 0 10-4M5 6c2-1 4-1 5 0" stroke="#a8681c" fill="none" strokeWidth="1" />
          </svg>
          A6 : Fluid Flow (Fluent) - CFD-Post
        </div>
        <div className="flex">
          <button type="button" aria-label="Minimize" className="flex h-[14px] w-[42px] items-center justify-center"><svg width="10" height="10" viewBox="0 0 10 10" aria-hidden="true"><path d="M0 5.500h10" stroke="#555" /></svg></button>
          <button type="button" aria-label="Maximize" className="flex h-[14px] w-[42px] items-center justify-center"><svg width="10" height="10" viewBox="0 0 10 10" aria-hidden="true"><path d="M0.500 0.500h8v8h-8z" stroke="#222" fill="none" /></svg></button>
          <button type="button" aria-label="Close" className="flex h-[14px] w-[43px] items-center justify-center"><svg width="10" height="10" viewBox="0 0 10 10" aria-hidden="true"><path d="M0.500 0.500l9 9M9.500 0.500l-9 9" stroke="#222" /></svg></button>
        </div>
      </header>
      <nav className="flex h-[17px] shrink-0 items-center gap-[14px] bg-white pl-[7px]">
        {["File", "Edit", "Monitor", "Session", "Insert", "Tools", "Help"].map((m) => (
          <button key={m} type="button">{m}</button>
        ))}
      </nav>
      <MainToolbar />
      <main className="flex min-h-0 flex-1">
        <LeftPanel />
        <RightPanel />
      </main>
      <footer className="flex h-[29px] shrink-0 items-end justify-between">
        <svg width="4" height="5" viewBox="0 0 4 5" aria-hidden="true"><path d="M0 0v5h4C1.500 4.500 0 3 0 0z" fill="#000" /></svg>
        <svg width="10" height="9" viewBox="0 0 10 9" aria-hidden="true"><path d="M7 1h2v2H7zM4 4h2v2H4zM7 4h2v2H7zM1 7h2v2H1zM4 7h2v2H4z" fill="#b4b4b4" /></svg>
      </footer>
    </div>
  );
}
